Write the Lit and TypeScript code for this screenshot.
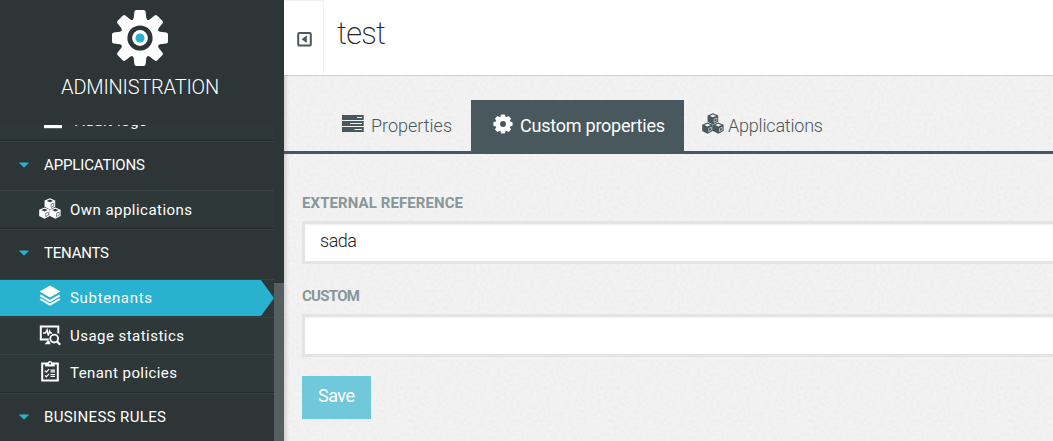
import { LitElement, html, css, svg } from "lit";
import { customElement, property } from "lit/decorators.js";

const cube = (x: number, y: number, face: string) => svg`
  <g transform="translate(${x} ${y})">
    <path d="M5.5 0 10.8 2.3V8.6L5.5 11.3 .2 8.6V2.3Z" fill="currentColor"/>
    <path d="M5.5 1.3 8.7 2.7 5.5 4.1 2.3 2.7Z" fill=${face}/>
    <path d="M6.7 6 9.4 4.8V7.8L6.7 9.2Z" fill="none" stroke=${face} stroke-width=".6"/>
  </g>`;

const icons: Record<string, unknown> = {
  cubes: svg`<svg width="22" height="22" viewBox="0 0 22 22">
    ${cube(5.4, 0.2, "var(--hole)")}${cube(0, 9.4, "var(--hole)")}${cube(10.8, 9.4, "var(--hole)")}</svg>`,
  layers: svg`<svg width="22" height="22" viewBox="0 0 22 22">
    <path d="M11 .6 21.4 6.6 11 12.6 .6 6.6Z" fill="currentColor"/>
    <path d="M1.2 10.3 11 16 20.8 10.3M1.2 14 11 19.7 20.8 14" fill="none" stroke="currentColor" stroke-width="2"/></svg>`,
  usage: svg`<svg width="22" height="22" viewBox="0 0 22 22">
    <path d="M9.8 15.4H1.8V2.5H19.3V9.5" fill="none" stroke="currentColor" stroke-width="2"/>
    <path d="M4 9H6.5L8 5.8 9.3 11.6 10.6 7 11.6 9H13" fill="none" stroke="currentColor" stroke-width="1.4"/>
    <path d="M5.6 20.3 8.5 16.8H10.3L11.6 20.3Z" fill="currentColor"/>
    <circle cx="15.2" cy="14.6" r="3.9" fill="none" stroke="currentColor" stroke-width="1.8"/>
    <path d="M17.8 17.2 21.2 20.8" stroke="currentColor" stroke-width="2.3"/></svg>`,
  policy: svg`<svg width="22" height="22" viewBox="0 0 22 22">
    <path d="M3.2 2.5H18.8V19.5H3.2Z" fill="none" stroke="currentColor" stroke-width="2"/>
    <path d="M6.2 2H8.4Q9.2 0 11 0T13.6 2H15.8V5.5H6.2Z" fill="currentColor"/>
    <circle cx="11" cy="2.6" r="1" fill="var(--hole)"/>
    <path d="M6 9.7 7.3 11.1 10 8.1M6 14.4 7.3 15.8 10 12.8" fill="none" stroke="currentColor" stroke-width="1.2"/>
    <path d="M11.5 9.1H16M11.5 10.9H16M11.5 13.7H16M11.5 15.5H16" stroke="currentColor" stroke-width="1.2"/></svg>`,
  log: svg`<svg width="26" height="22" viewBox="0 0 26 22"><path d="M4 1H22V19.2H4Z" fill="currentColor"/></svg>`,
  server: svg`<svg width="22" height="18" viewBox="0 0 22 18">
    <path d="M0 0H21.7V5H0ZM0 6H21.7V11H0ZM0 12H21.7V17H0Z" fill="currentColor"/>
    <path d="M15 2.5H20M8 8.5H20M12.5 14.5H20" stroke="var(--hole)" stroke-width="1.2"/></svg>`,
  gear: svg`<svg width="20" height="20" viewBox="-10 -10 20 20">
    ${[0, 45, 90, 135].map((a) => svg`<rect x="-2.2" y="-9.6" width="4.4" height="19.2" rx="1.1" fill="currentColor" transform="rotate(${a})"/>`)}
    <circle r="7.7" fill="currentColor"/><circle r="3" fill="var(--hole)"/></svg>`,
};

/** A line of text whose tracking is computed so that it fills `width` pixels. */
@customElement("tracked-text")
export class TrackedText extends LitElement {
  @property({ type: Number }) width = 0;
  @property() text = "";
  static styles = css`
    :host { display: inline-block; white-space: nowrap; }
    .line { display: inline-block; }
  `;
  render() {
    return html`<span class="line">${this.text}</span>`;
  }
  updated() {
    const line = this.renderRoot.querySelector<HTMLElement>(".line")!;
    line.style.letterSpacing = "0px";
    const natural = line.getBoundingClientRect().width;
    line.style.letterSpacing = `${(this.width - natural) / (this.text.length - 1)}px`;
  }
}

@customElement("side-item")
export class SideItem extends LitElement {
  @property() icon = "";
  @property() label = "";
  @property({ type: Number }) width = 0;
  static styles = css`
    :host {
      --hole: #2f3839;
      display: flex; box-sizing: border-box; height: 37.5px; flex: none;
      padding: 6px 0 0 39px; color: #fff;
      background: #2f3839; border-top: 1px solid #364143;
      font-size: 15px; line-height: 22px;
    }
    svg { display: block; flex: none; margin-right: 9px; }
    tracked-text { padding-top: 1px; }
    :host([active]) { padding: 0; }
    :host([active]) .fill {
      width: 274px; box-sizing: border-box; height: 36px; padding: 5px 0 0 39px;
      background: #28b2d0;
      clip-path: polygon(0 0, 261px 0, 100% 50%, 261px 100%, 0 100%);
    }
    :host([active]) tracked-text { padding-top: 2px; }
    .fill { display: flex; }
  `;
  render() {
    return html`<div class="fill">${icons[this.icon]}<tracked-text .width=${this.width} .text=${this.label}></tracked-text></div>`;
  }
}

@customElement("side-group")
export class SideGroup extends LitElement {
  @property() label = "";
  @property({ type: Number }) width = 0;
  static styles = css`
    :host {
      display: flex; box-sizing: border-box; height: 50px; flex: none;
      padding: 13px 0 0 19px; color: #fff; font-size: 15px; line-height: 22px;
      border-top: 1px solid #252c2d; box-shadow: inset 0 1px #364143;
    }
    svg { display: block; margin: 8px 15px 0 0; }
  `;
  render() {
    return html`<svg width="10" height="6" viewBox="0 0 10 6"><path d="M.7 1H9.3L5 5.2Z" fill="#28b2d0" stroke="#28b2d0" stroke-linejoin="round"/></svg>
      <tracked-text .width=${this.width} .text=${this.label}></tracked-text>`;
  }
}

@customElement("app-root")
export class AppRoot extends LitElement {
  static styles = css`
    :host {
      display: flex; width: 1053px; height: 441px; overflow: hidden;
      font-family: Roboto, "Liberation Sans", sans-serif;
    }
    .side { display: flex; flex-direction: column; width: 284px; flex: none; background: #2d3536; color: #fff; }
    .brand { display: flex; flex-direction: column; align-items: center; height: 125px; flex: none; padding: 10px 4px 0 0; box-sizing: border-box; }
    .brand svg { display: block; }
    .brand tracked-text { margin-top: 9px; font-size: 20px; font-weight: 300; line-height: 24px; }
    .scroll { display: flex; flex: 1; min-height: 0; overflow: hidden; }
    .list { display: flex; flex-direction: column; width: 274px; }
    .clip { height: 15px; flex: none; overflow: hidden; display: flex; flex-direction: column; justify-content: flex-end; background: #2f3839; }
    .clip side-item { height: 31px; padding-top: 0; padding-left: 40px; border: 0; }
    .g1 { height: 50px; }
    .i1 { height: 38px; padding-top: 7px; }
    .g2 { height: 51px; }
    .bar { width: 10px; margin-top: 158px; background: #565f60; }
    .main {
      flex: 1; min-width: 0; display: flex; flex-direction: column; background-color: #f3f3f3;
      background-image: linear-gradient(90deg, rgba(0,0,0,.13), transparent 5px),
        url("data:image/svg+xml,%3Csvg xmlns='http://www.w3.org/2000/svg' width='200' height='200'%3E%3Cfilter id='n' x='0' y='0' width='100%25' height='100%25'%3E%3CfeTurbulence type='fractalNoise' baseFrequency='.3' numOctaves='2' stitchTiles='stitch'/%3E%3CfeColorMatrix values='0 0 0 0 0 0 0 0 0 0 0 0 0 0 0 .035 0 0 0 -.01'/%3E%3C/filter%3E%3Crect width='200' height='200' filter='url(%23n)'/%3E%3C/svg%3E");
    }
    .top { display: flex; height: 75px; flex: none; background: #fff; box-shadow: 0 1px 1px rgba(0,0,0,.12); }
    .toggle { width: 40px; box-sizing: border-box; border-right: 1px solid #f2f2f2; border-top: 1px solid #f2f2f2; padding: 31px 0 0 13px; flex: none; }
    .toggle svg { display: block; }
    .title { margin: 16px 0 0 13px; font-size: 31px; font-weight: 200; line-height: 36px; color: #222; }
    .tabs { display: flex; height: 51px; flex: none; margin-top: 25px; padding-left: 39px; border-bottom: 3px solid #48585c; color: #48585c; font-size: 18px; font-weight: 300; line-height: 24px; }
    .tab { --hole: #f1f1f1; display: flex; box-sizing: border-box; padding: 14px 0 0 18px; }
    .tab svg { display: block; flex: none; }
    .props { width: 148px; padding-left: 19px; }
    .props svg { margin: 1px 7px 0 0; }
    .custom { --hole: #48585c; width: 213px; height: 52px; padding-left: 22px; background: #48585c; color: #fff; font-weight: 400; }
    .custom svg { margin: 0 7px 0 0; }
    .apps svg { margin: -1px 4px 0 0; }
    .form { padding: 38px 0 0 18px; display: flex; flex-direction: column; align-items: flex-start; }
    .label { height: 20px; line-height: 20px; font-size: 15px; font-weight: 700; color: #87979a; margin-top: 1px; }
    .input { align-self: stretch; height: 43px; box-sizing: border-box; margin-top: 8px; border: 3px solid #e3e5e5; border-right: 0; background: #fff; box-shadow: inset 0 1px 2px rgba(0,0,0,.06); padding: 5px 0 0 15px; font-size: 18px; font-weight: 300; line-height: 24px; color: #222; }
    .second { margin-top: 22px; }
    .save { display: flex; align-items: flex-start; width: 69px; height: 43px; box-sizing: border-box; margin: 19px 0 0; padding: 8px 0 0 16px; border: 0; background: #6fc9db; color: #fff; font: 400 18px/24px Roboto, sans-serif; text-align: left; }
  `;

  private text(text: string, width: number, cls = "") {
    return html`<tracked-text class=${cls} .text=${text} .width=${width}></tracked-text>`;
  }

  render() {
    return html`
      <nav class="side">
        <div class="brand">
          <svg width="56" height="56" viewBox="-28 -28 56 56">
            <g fill="#fff">
              ${[0, 45, 90, 135].map((a) => svg`<path transform="rotate(${a})" d="M-3.5 -28H3.5Q5.4 -28 5.6 -26.3L6.3 -20Q7 -18 9 -17V17Q7 18 6.3 20L5.6 26.3Q5.4 28 3.5 28H-3.5Q-5.4 28 -5.6 26.3L-6.3 20Q-7 18 -9 17V-17Q-7 -18 -6.3 -20L-5.6 -26.3Q-5.4 -28 -3.5 -28Z"/>`)}
              <circle r="19.5"/>
            </g>
            <circle r="12.6" fill="#2d3536"/><circle r="7.9" fill="#fff"/><circle r="4.6" fill="#28b2d0"/>
          </svg>
          ${this.text("ADMINISTRATION", 158)}
        </div>
        <div class="scroll">
          <div class="list">
            <div class="clip"><side-item icon="log" label="Audit logs" .width=${72}></side-item></div>
            <side-group class="g1" label="APPLICATIONS" .width=${101}></side-group>
            <side-item class="i1" icon="cubes" label="Own applications" .width=${122}></side-item>
            <side-group class="g2" label="TENANTS" .width=${65}></side-group>
            <side-item active icon="layers" label="Subtenants" .width=${82}></side-item>
            <side-item icon="usage" label="Usage statistics" .width=${114}></side-item>
            <side-item icon="policy" label="Tenant policies" .width=${107}></side-item>
            <side-group label="BUSINESS RULES" .width=${122}></side-group>
          </div>
          <div class="bar"></div>
        </div>
      </nav>
      <main class="main">
        <header class="top">
          <div class="toggle">
            <svg width="16" height="16" viewBox="0 0 16 16"><rect x="1.2" y="1" width="12.6" height="12.6" rx="1.2" fill="none" stroke="#48585c" stroke-width="2"/><path d="M9.8 3.6V11.1L4.6 7.3Z" fill="#48585c"/></svg>
          </div>
          ${this.text("test", 49, "title")}
        </header>
        <div class="tabs">
          <div class="tab props">${icons.server}${this.text("Properties", 81)}</div>
          <div class="tab custom">${icons.gear}${this.text("Custom properties", 145)}</div>
          <div class="tab apps">${icons.cubes}${this.text("Applications", 95)}</div>
        </div>
        <div class="form">
          ${this.text("EXTERNAL REFERENCE", 161, "label")}
          <div class="input">${this.text("sada", 37)}</div>
          ${this.text("CUSTOM", 58, "label second")}
          <div class="input"></div>
          <button class="save">${this.text("Save", 37)}</button>
        </div>
      </main>`;
  }
}
